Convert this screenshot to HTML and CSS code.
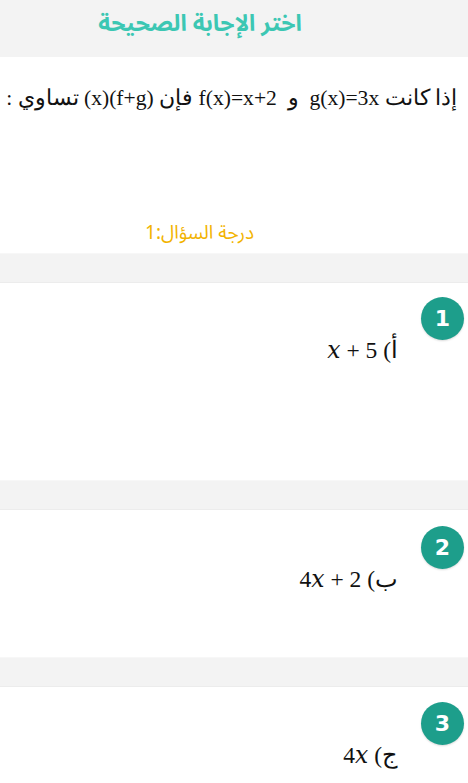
FILE: index.html
```html
<!DOCTYPE html>
<html lang="ar" dir="rtl">
<head>
<meta charset="utf-8">
<link rel="stylesheet" href="styles.css">
</head>
<body>
<header class="header">
  <h1 class="title">اختر الإجابة الصحيحة</h1>
</header>
<section class="question">
  <p class="q-text">إذا كانت g(x)=3x  و  f(x)=x+2 فإن (f+g)(x) تساوي :</p>
  <p class="grade">درجة السؤال:1</p>
</section>
<div class="sep"></div>
<div class="option opt-1">
  <span class="badge">1</span>
  <p class="answer">أ) <span class="math"><i>x</i> + 5</span></p>
</div>
<div class="sep"></div>
<div class="option opt-2">
  <span class="badge">2</span>
  <p class="answer">ب) <span class="math">4<i>x</i> + 2</span></p>
</div>
<div class="sep"></div>
<div class="option opt-3">
  <span class="badge">3</span>
  <p class="answer">ج) <span class="math">4<i>x</i></span></p>
</div>
</body>
</html>
```
FILE: styles.css
```css
html, body {
  margin: 0;
  padding: 0;
  background: #ffffff;
}
body {
  width: 468px;
  overflow: hidden;
  font-family: "Liberation Serif", "DejaVu Serif", serif;
}
.header {
  height: 57px;
  box-sizing: border-box;
  background: #f3f3f3;
  display: flex;
  align-items: flex-start;
  justify-content: center;
  padding: 0 68px 0 0;
}
.title {
  margin: 0;
  padding: 6px 4px;
  font-family: "Noto Sans Arabic", "DejaVu Sans", sans-serif;
  font-size: 23px;
  font-weight: bold;
  color: #3cc7b3;
  line-height: 36px;
}
.question {
  height: 196px;
  padding: 0 11px 0 4px;
  box-sizing: border-box;
  display: flex;
  flex-direction: column;
}
.q-text {
  margin: 29px 0 0 0;
  font-size: 21.6px;
  line-height: 24px;
  color: #111;
  white-space: pre;
}
.grade {
  margin: auto 0 8px 0;
  text-align: center;
  padding-right: 62px;
  font-family: "Noto Sans Arabic", "DejaVu Sans", sans-serif;
  font-size: 19px;
  line-height: 24px;
  color: #f2b300;
}
.sep {
  height: 28px;
  background: #f3f3f3;
  border-top: 1px solid #f7f7f7;
  border-bottom: 1px solid #ececec;
}
.option {
  display: flex;
  flex-direction: column;
  align-items: flex-start;
  padding: 14px 4px 0 0;
  box-sizing: border-box;
}
.opt-1 { height: 197px; }
.opt-2 { height: 147px; padding-top: 16px; }
.opt-3 { height: 110px; padding-top: 15px; }
.badge {
  width: 43px;
  height: 43px;
  border-radius: 50%;
  background: #1d9e8b;
  color: #ffffff;
  font-family: "DejaVu Sans", sans-serif;
  font-weight: bold;
  font-size: 22px;
  display: flex;
  align-items: center;
  justify-content: center;
  box-shadow: 0 1px 2px rgba(0,0,0,0.15);
}
.answer {
  margin: 0;
  margin-right: 66px;
  font-size: 23.5px;
  line-height: 20px;
  color: #111;
}
.math i {
  font-family: "DejaVu Serif", "Liberation Serif", serif;
  font-style: italic;
}
```
